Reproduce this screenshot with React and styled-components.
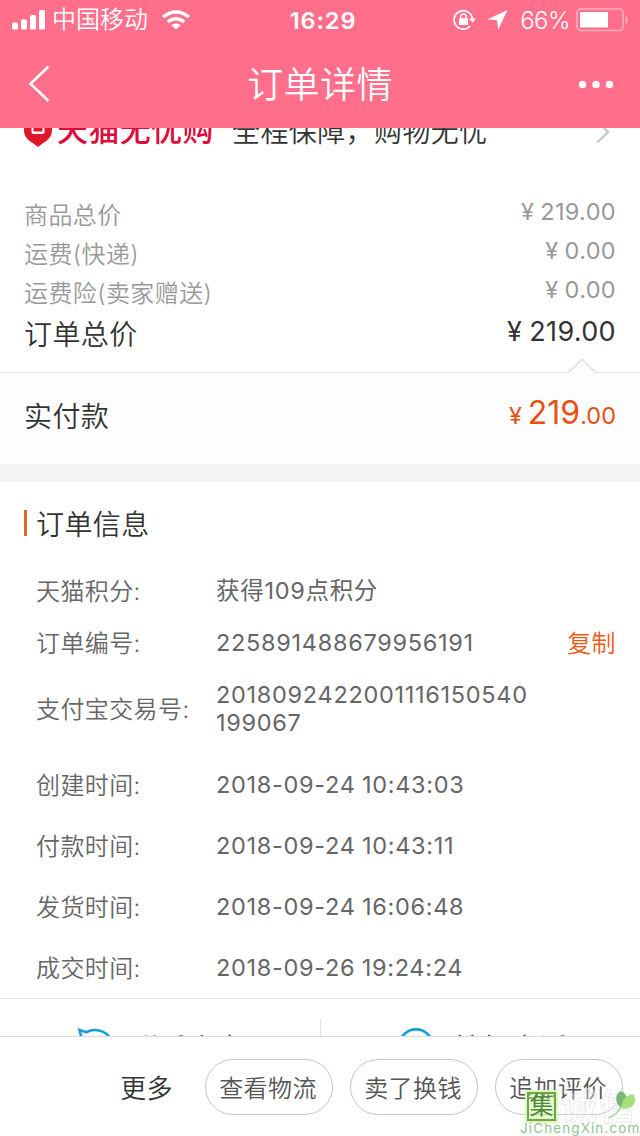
import React from 'react';
import styled, { createGlobalStyle } from 'styled-components';

const prices = [
  { label: '商品总价', value: '219.00' },
  { label: '运费(快递)', value: '0.00' },
  { label: '运费险(卖家赠送)', value: '0.00' },
];

const orderInfo = [
  { label: '天猫积分:', value: '获得109点积分', height: 52 },
  { label: '订单编号:', value: '225891488679956191', height: 52, copy: true },
  { label: '支付宝交易号:', value: '2018092422001116150540199067', height: 80 },
  { label: '创建时间:', value: '2018-09-24 10:43:03', height: 71 },
  { label: '付款时间:', value: '2018-09-24 10:43:11', height: 51 },
  { label: '发货时间:', value: '2018-09-24 16:06:48', height: 71 },
  { label: '成交时间:', value: '2018-09-26 19:24:24', height: 51 },
];

const actions = ['查看物流', '卖了换钱', '追加评价'];

const SignalIcon = () => (
  <svg width="34" height="20" viewBox="0 0 34 20" fill="#fff">
    <rect x="0" y="12.5" width="6" height="7" rx="1.6" />
    <rect x="9" y="9.5" width="6" height="10" rx="1.6" />
    <rect x="18" y="5" width="6" height="14.5" rx="1.6" />
    <rect x="27" y="0" width="6" height="19.5" rx="1.6" />
  </svg>
);

const WifiIcon = () => (
  <svg width="28" height="20" viewBox="0 0 28 20" fill="none" stroke="#fff" strokeWidth="3.6">
    <path d="M1.2 7.2C8.5 0.2 19.5 0.2 26.8 7.2" />
    <path d="M5.8 12C10.5 7.6 17.5 7.6 22.2 12" />
    <path d="M14 19.6L9.2 15.2C12 12.9 16 12.9 18.8 15.2Z" fill="#fff" stroke="none" />
  </svg>
);

const LockIcon = () => (
  <svg width="23" height="22" viewBox="0 0 23 22" fill="none" stroke="#fff">
    <path d="M17.2 17A9.2 9.2 0 1 1 19.4 9.5" strokeWidth="1.7" />
    <path d="M16 9.4H23L19.5 13.6Z" fill="#fff" stroke="none" />
    <rect x="6" y="9.3" width="9" height="6.8" rx="0.8" fill="#fff" stroke="none" />
    <path d="M7.8 10V7.6a2.7 2.7 0 0 1 5.4 0V10" strokeWidth="1.5" />
  </svg>
);

const LocationIcon = () => (
  <svg width="21" height="20" viewBox="0 0 21 20" fill="#fff">
    <path d="M20.5 0L0.5 9.3L10 10.2L11.2 19.7Z" />
  </svg>
);

const BatteryIcon = () => (
  <svg width="53" height="24" viewBox="0 0 53 24">
    <rect x="1" y="1" width="46" height="21.5" rx="4" fill="none" stroke="#ffb0bf" strokeWidth="1.6" />
    <rect x="4" y="4" width="28" height="15.5" fill="#fff" />
    <path d="M49.5 8C52.8 9 52.8 15 49.5 16Z" fill="#ffb0bf" />
  </svg>
);

const BackIcon = () => (
  <svg width="22" height="38" viewBox="0 0 22 38" fill="none" stroke="#fff" strokeWidth="2.6">
    <path d="M20.5 1.5L2.5 18.8L20.5 36" />
  </svg>
);

const MoreIcon = () => (
  <svg width="36" height="8" viewBox="0 0 36 8" fill="#fff">
    <circle cx="3.5" cy="4.4" r="3.7" />
    <circle cx="17" cy="4.4" r="3.7" />
    <circle cx="30.5" cy="4.4" r="3.7" />
  </svg>
);

const ShieldIcon = () => (
  <svg width="28" height="34" viewBox="0 0 28 34">
    <path d="M0 2H28V15C28 24 22 25.5 14 32C6 25.5 0 24 0 15Z" fill="#e0162b" />
    <path d="M7.5 9V17Q7.5 19 9.5 19H18.5Q20.5 19 20.5 17V9H18.5V16.5H9.5V9Z" fill="#fff" />
  </svg>
);

const ArrowIcon = () => (
  <svg width="14" height="24" viewBox="0 0 14 24" fill="none" stroke="#c8c8c8" strokeWidth="2.4">
    <path d="M1.5 1.5L12 12L1 22.5" />
  </svg>
);

const NotchIcon = () => (
  <svg width="28" height="15" viewBox="0 0 28 15">
    <path d="M1 15L14 1.5L27 15Z" fill="#fdfdfd" />
    <path d="M1 14L14 1.2L27 14" fill="none" stroke="#dcdcdc" strokeWidth="1.2" />
  </svg>
);

const ChatIcon = () => (
  <svg width="36" height="34" viewBox="0 0 36 34" fill="none" stroke="#199ed8" strokeWidth="2.6">
    <path d="M4 12L1.5 2L8 4.2C19 -1 33 4 33 16C33 34 3 35 3 16Q3 12 5 8" />
  </svg>
);

const PhoneIcon = () => (
  <svg width="36" height="34" viewBox="0 0 36 34" fill="none" stroke="#199ed8" strokeWidth="2.6">
    <circle cx="18" cy="18" r="16.6" />
  </svg>
);

const LeafIcon = () => (
  <svg width="28" height="28" viewBox="0 0 28 28">
    <path d="M13 17C6 11 7 3 13 0C20 3 20 10 15 17Z" fill="#78b97a" />
    <path d="M13 17C14 8 19 3 26 4C30 12 23 20 13 17Z" fill="#a9de7c" />
    <path d="M14 14Q11 22 1 27" fill="none" stroke="#a5d890" strokeWidth="1.5" />
  </svg>
);

const App = () => {
  return (
    <Screen>
      <GlobalStyle />
      <StatusBar>
        <StatusGroup>
          <SignalIcon />
          <Carrier>中国移动</Carrier>
          <WifiIcon />
        </StatusGroup>
        <Clock>16:29</Clock>
        <StatusGroup $end>
          <LockIcon />
          <LocationSlot><LocationIcon /></LocationSlot>
          <Percent>66%</Percent>
          <BatteryIcon />
        </StatusGroup>
      </StatusBar>
      <NavBar>
        <BackIcon />
        <NavTitle>订单详情</NavTitle>
        <MoreIcon />
      </NavBar>

      <Content>
        <Guarantee>
          <ShieldIcon />
          <TmallName>天猫无忧购</TmallName>
          <GuaranteeText>全程保障，购物无忧</GuaranteeText>
          <ArrowIcon />
        </Guarantee>

        <PriceList>
          {prices.map((item) => (
            <PriceRow key={item.label}>
              <PriceLabel>{item.label}</PriceLabel>
              <Amount><Yen>¥</Yen>{item.value}</Amount>
            </PriceRow>
          ))}
          <PriceRow $total>
            <PriceLabel>订单总价</PriceLabel>
            <Amount $total><Yen $total>¥</Yen>219.00</Amount>
          </PriceRow>
        </PriceList>

        <PaidRow>
          <Notch><NotchIcon /></Notch>
          <PaidLabel>实付款</PaidLabel>
          <PaidAmount>
            <PaidSmall $yen>¥</PaidSmall>219<PaidSmall>.00</PaidSmall>
          </PaidAmount>
        </PaidRow>
        <Divider />

        <SectionTitle>订单信息</SectionTitle>
        <InfoList>
          {orderInfo.map((item) => (
            <InfoRow key={item.label} $height={item.height}>
              <InfoLabel>{item.label}</InfoLabel>
              <InfoValue>{item.value}</InfoValue>
              {item.copy && <CopyButton>复制</CopyButton>}
            </InfoRow>
          ))}
        </InfoList>

        <ContactRow>
          <Contact $left={78}>
            <ChatIcon />
            <ContactText $gap={17}>联系卖家</ContactText>
          </Contact>
          <ContactLine />
          <Contact $left={77}>
            <PhoneIcon />
            <ContactText $gap={20}>拨打电话</ContactText>
          </Contact>
        </ContactRow>
      </Content>

      <Footer>
        <MoreButton>更多</MoreButton>
        {actions.map((name) => (
          <ActionButton key={name}>{name}</ActionButton>
        ))}
      </Footer>

      <Watermark>
        <WatermarkTop>
          <Seal>集</Seal>
          <WatermarkName>诚信</WatermarkName>
          <LeafSlot><LeafIcon /></LeafSlot>
        </WatermarkTop>
        <WatermarkUrl>JiChengXin.com</WatermarkUrl>
      </Watermark>
    </Screen>
  );
};

const GlobalStyle = createGlobalStyle`
  * {
    box-sizing: border-box;
  }

  body {
    margin: 0;
    background: #fff;
  }

  button {
    font: inherit;
    letter-spacing: inherit;
    color: inherit;
    background: none;
    border: none;
    padding: 0;
  }

  svg {
    display: block;
    flex: none;
  }
`;

const Screen = styled.div`
  position: relative;
  display: flex;
  flex-direction: column;
  width: 640px;
  height: 1136px;
  overflow: hidden;
  background: #fff;
  font-family: Inter, 'Noto Sans CJK SC', sans-serif;
  font-weight: 350;
  letter-spacing: 0.4px;
  white-space: nowrap;
`;

const StatusBar = styled.div`
  display: grid;
  grid-template-columns: 1fr auto 1fr;
  align-items: center;
  height: 40px;
  padding: 0 11px 0 12px;
  background: #ff6e8a;
  color: #fff;
`;

const StatusGroup = styled.div`
  display: flex;
  align-items: center;
  gap: 8px;
  justify-content: ${({ $end }) => ($end ? 'flex-end' : 'flex-start')};
`;

const Carrier = styled.span`
  margin: 0 6px 0 -2px;
  font-size: 24px;
  line-height: 38px;
  letter-spacing: 0;
`;

const Clock = styled.span`
  font-size: 23.5px;
  font-weight: 600;
  letter-spacing: 0.9px;
  margin-right: -5px;
`;

const LocationSlot = styled.span`
  margin-left: 3px;
`;

const Percent = styled.span`
  font-size: 24px;
  letter-spacing: -0.5px;
  margin: 0 -2px 0 4px;
`;

const NavBar = styled.header`
  display: flex;
  align-items: center;
  justify-content: space-between;
  height: 88px;
  padding: 0 25px 0 28px;
  background: #ff6e8a;
  color: #fff;
`;

const NavTitle = styled.h1`
  margin: 0 0 4px 11px;
  font-size: 36px;
  font-weight: 350;
  letter-spacing: 0.4px;
`;

const Content = styled.main`
  height: 908px;
  overflow: hidden;
`;

const Guarantee = styled.div`
  display: flex;
  align-items: center;
  height: 40px;
  margin-top: -16px;
  padding: 0 30px 0 24px;
`;

const TmallName = styled.span`
  margin: 0 0 9px 5px;
  font-size: 31px;
  font-weight: 500;
  letter-spacing: 0.4px;
  color: #dd0b3e;
`;

const GuaranteeText = styled.span`
  flex: 1;
  margin: 0 0 4px 18px;
  font-size: 28px;
  color: #333;
`;

const PriceList = styled.div`
  height: 221px;
  padding: 43px 24px 0;
  border-bottom: 1px solid #e2e2e2;
`;

const PriceRow = styled.div`
  display: flex;
  align-items: center;
  justify-content: space-between;
  height: ${({ $total }) => ($total ? '44px' : '39px')};
  font-size: ${({ $total }) => ($total ? '28px' : '24px')};
  color: ${({ $total }) => ($total ? '#333' : '#999')};
`;

const PriceLabel = styled.span`
  margin-bottom: 2px;
`;

const Amount = styled.span`
  font-size: ${({ $total }) => ($total ? '27px' : '23.5px')};
  font-weight: 380;
  line-height: 28px;
  margin-bottom: ${({ $total }) => ($total ? '4px' : '6px')};
  letter-spacing: 0.35px;
`;

const Yen = styled.span`
  margin-right: ${({ $total }) => ($total ? '7px' : '6px')};
`;

const PaidRow = styled.div`
  position: relative;
  display: flex;
  align-items: center;
  justify-content: space-between;
  height: 91px;
  padding: 0 24px 8px;
  background: #fdfdfd;
`;

const Notch = styled.div`
  position: absolute;
  top: -15px;
  right: 44px;
`;

const PaidLabel = styled.span`
  font-size: 28px;
  color: #333;
`;

const PaidAmount = styled.span`
  margin: 0 0 4px;
  font-size: 32px;
  font-weight: 400;
  letter-spacing: 0;
  color: #e8500f;
`;

const PaidSmall = styled.span`
  font-size: 23.5px;
  margin-right: ${({ $yen }) => ($yen ? '6px' : '0')};
`;

const Divider = styled.div`
  height: 18px;
  background: #f3f3f3;
`;

const SectionTitle = styled.h2`
  display: flex;
  align-items: center;
  height: 83px;
  margin: 0 24px;
  padding-bottom: 2px;
  font-size: 28px;
  font-weight: 350;
  color: #333;

  &::before {
    content: '';
    width: 3px;
    height: 26px;
    margin-right: 9px;
    background: #dd6a2b;
  }
`;

const InfoList = styled.div`
  height: 434px;
  padding: 0 24px 0 36px;
  border-bottom: 1px solid #e2e2e2;
`;

const InfoRow = styled.div`
  display: flex;
  align-items: center;
  height: ${({ $height }) => $height}px;
  font-size: 24px;
  color: #666;
`;

const InfoLabel = styled.span`
  width: 180px;
  margin-bottom: 3px;
`;

const InfoValue = styled.span`
  width: 316px;
  font-size: 23.5px;
  font-weight: 380;
  line-height: 28px;
  letter-spacing: 0.7px;
  word-spacing: -1px;
  word-break: break-all;
  white-space: normal;
`;

const CopyButton = styled.button`
  margin: 0 0 3px auto;
  color: #f05a14;
`;

const ContactRow = styled.div`
  display: flex;
  height: 90px;
`;

const Contact = styled.div`
  display: flex;
  flex: 1;
  padding: 29px 0 0 ${({ $left }) => $left}px;
`;

const ContactText = styled.span`
  margin: 1px 0 0 ${({ $gap }) => $gap}px;
  font-size: 28px;
  line-height: 40px;
  color: #444;
`;

const ContactLine = styled.div`
  width: 1px;
  margin-top: 20px;
  background: #e2e2e2;
`;

const Footer = styled.footer`
  display: flex;
  align-items: center;
  justify-content: flex-end;
  gap: 17px;
  height: 100px;
  padding-right: 17px;
  border-top: 1px solid #dcdcdc;
  background: #fff;
`;

const MoreButton = styled.button`
  margin-right: 15px;
  font-size: 26px;
  color: #333;
`;

const ActionButton = styled.button`
  width: 128px;
  height: 56px;
  padding-right: 2px;
  border: 1px solid #c4c4c4;
  border-radius: 28px;
  font-size: 24px;
  color: #555;
`;

/* stamp over the bottom right corner */
const Watermark = styled.div`
  position: absolute;
  right: 0;
  bottom: 0;
  width: 120px;
`;

const WatermarkTop = styled.div`
  display: flex;
  align-items: center;
  height: 34px;
  padding: 3px 0 0 7px;
`;

const Seal = styled.span`
  width: 29px;
  height: 29px;
  border: 2px solid #6da648;
  outline: 2px solid #e0f7b8;
  background: rgba(205, 242, 145, 0.45);
  font-size: 24px;
  font-weight: 400;
  line-height: 23px;
  text-align: center;
  color: #4a8a3c;
  letter-spacing: 0;
`;

const WatermarkName = styled.span`
  margin-left: 5px;
  font-size: 36px;
  font-weight: 700;
  line-height: 32px;
  letter-spacing: 2px;
  color: rgba(255, 255, 255, 0.3);
  -webkit-text-stroke: 0.5px #dadada;
`;

const LeafSlot = styled.div`
  position: absolute;
  top: 3px;
  right: 4px;
`;

const WatermarkUrl = styled.div`
  height: 14px;
  font-size: 13.5px;
  font-weight: 400;
  line-height: 13px;
  letter-spacing: 1.1px;
  color: #8fc48d;
`;

export default App;
